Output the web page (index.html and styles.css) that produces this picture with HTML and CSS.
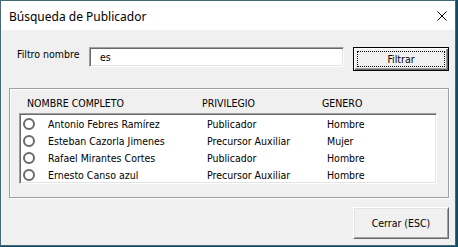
FILE: index.html
```html
<!DOCTYPE html>
<html lang="es">

    <head>
        <meta charset="UTF-8">
        <meta name="viewport" content="width=device-width, initial-scale=1.0">
        <title>Búsqueda de Publicador</title>
        <link rel="stylesheet" href="styles.css">
    </head>

    <body>
        <div class="window">
            <div class="titlebar">
                <span class="title">Búsqueda de Publicador</span>
                <svg class="close" width="10" height="10" viewBox="0 0 10 10">
                    <path d="M0.5 0.5 L9.5 9.5 M9.5 0.5 L0.5 9.5" stroke="#000" stroke-width="1" fill="none"/>
                </svg>
            </div>

            <div class="client">
                <div class="filter-row">
                    <label class="filter-label" for="filtro">Filtro nombre</label>
                    <input class="filter-input" id="filtro" type="text" value="es">
                    <button class="btn btn-default"><span class="focus">Filtrar</span></button>
                </div>

                <div class="group">
                    <div class="list-head">
                        <span>NOMBRE COMPLETO</span>
                        <span>PRIVILEGIO</span>
                        <span>GENERO</span>
                    </div>
                    <div class="list">
                        <div class="row">
                            <span class="radio"></span>
                            <span>Antonio Febres Ramírez</span>
                            <span>Publicador</span>
                            <span>Hombre</span>
                        </div>
                        <div class="row">
                            <span class="radio"></span>
                            <span>Esteban Cazorla Jimenes</span>
                            <span>Precursor Auxiliar</span>
                            <span>Mujer</span>
                        </div>
                        <div class="row">
                            <span class="radio"></span>
                            <span>Rafael Mirantes Cortes</span>
                            <span>Publicador</span>
                            <span>Hombre</span>
                        </div>
                        <div class="row">
                            <span class="radio"></span>
                            <span>Ernesto Canso azul</span>
                            <span>Precursor Auxiliar</span>
                            <span>Hombre</span>
                        </div>
                    </div>
                </div>

                <div class="footer">
                    <button class="btn btn-close">Cerrar (ESC)</button>
                </div>
            </div>
        </div>
    </body>

</html>
```

FILE: styles.css
```css
* {
    box-sizing: border-box;
}

body {
    margin: 0;
    background-color: #0f4b66;
    font-family: "DejaVu Sans Condensed", "Liberation Sans", sans-serif;
    font-size: 10.5px;
    color: #000;
}

.window {
    display: flex;
    flex-direction: column;
    width: 456px;
    height: 246px;
    border: 1px solid #44697a;
    background-color: #f0f0f0;
}

.titlebar {
    display: flex;
    justify-content: space-between;
    align-items: center;
    height: 29px;
    padding: 0 8px;
    background-color: #fff;
    font-family: "Noto Sans", sans-serif;
    font-size: 12px;
}

.title {
    margin-top: 1px;
}

.client {
    flex: 1;
    display: flex;
    flex-direction: column;
    padding: 17px 6px 0 8px;
}

.filter-row {
    display: flex;
    align-items: flex-start;
    height: 24px;
}

.filter-label {
    width: 72px;
    margin-left: 8px;
    line-height: 14px;
}

.filter-input {
    width: 255px;
    height: 20px;
    padding: 0 0 0 10px;
    border: 1px solid;
    border-color: #a0a0a0 #fff #fff #a0a0a0;
    box-shadow: inset 1px 1px 0 #696969, inset -1px -1px 0 #e3e3e3;
    background-color: #fff;
    font-family: inherit;
    font-size: inherit;
    color: #000;
    outline: none;
}

.btn {
    width: 96px;
    padding: 0;
    background-color: #f0f0f0;
    font-family: inherit;
    font-size: inherit;
    color: #000;
}

.btn-default {
    display: flex;
    height: 24px;
    margin-left: 9px;
    padding: 3px;
    border: 1px solid #000;
    box-shadow: inset 1px 1px 0 #fff, inset -1px -1px 0 #696969, inset -2px -2px 0 #a0a0a0;
}

.focus {
    flex: 1;
    display: flex;
    justify-content: center;
    align-items: center;
    border: 1px dotted #000;
}

.group {
    width: 440px;
    height: 110px;
    margin-top: 17px;
    padding: 8px 0 0 9px;
    border: 1px solid #a0a0a0;
    box-shadow: 1px 1px 0 #fff, inset 1px 1px 0 #fff;
}

.list-head {
    display: grid;
    grid-template-columns: 175px 120px auto;
    margin-left: 8px;
    line-height: 13px;
}

.list {
    width: 418px;
    height: 71px;
    margin-top: 3px;
    padding-top: 1px;
    border: 1px solid;
    border-color: #a0a0a0 #fff #fff #a0a0a0;
    box-shadow: inset 1px 1px 0 #696969, inset -1px -1px 0 #e3e3e3;
    background-color: #fff;
}

.row {
    display: grid;
    grid-template-columns: 28px 159px 120px auto;
    align-items: center;
    height: 17px;
}

.radio {
    width: 12px;
    height: 12px;
    margin-left: 3px;
    border: 2px solid #6a6a6a;
    border-radius: 50%;
    background-color: #fff;
}

.footer {
    display: flex;
    justify-content: flex-end;
    margin-top: 9px;
}

.btn-close {
    height: 32px;
    border: 1px solid;
    border-color: #fff #696969 #696969 #fff;
    box-shadow: inset 1px 1px 0 #e3e3e3, inset -1px -1px 0 #a0a0a0;
}
```
